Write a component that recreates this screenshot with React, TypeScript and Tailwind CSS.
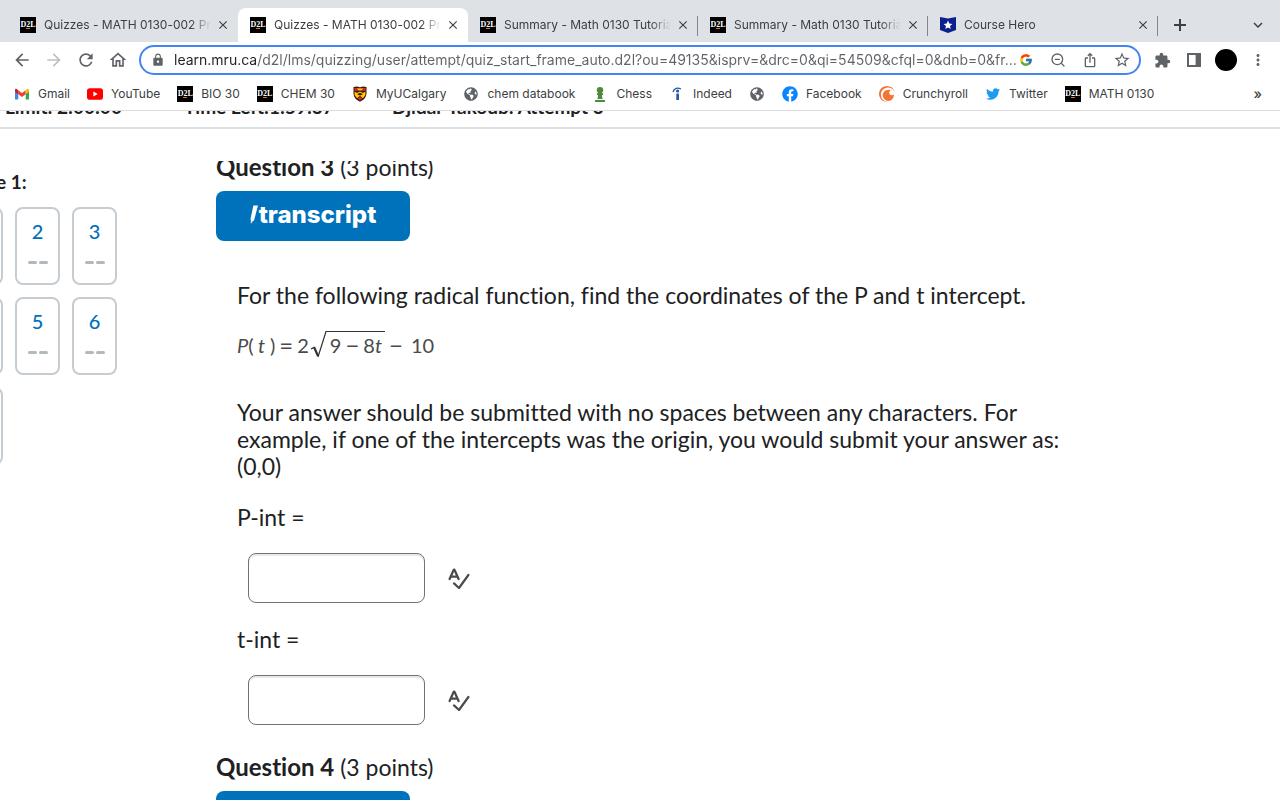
import type { ReactNode } from "react";
import { ZoomOut } from "lucide-react";
import { FcGoogle } from "react-icons/fc";
import { FaChessPawn, FaFacebook, FaGlobeAmericas, FaTwitter } from "react-icons/fa";
import {
  MdArrowBack,
  MdArrowForward,
  MdClose,
  MdExtension,
  MdKeyboardArrowDown,
  MdLock,
  MdMoreVert,
  MdOutlineHome,
  MdOutlineIosShare,
  MdRefresh,
  MdStarBorder,
} from "react-icons/md";
import { SiCrunchyroll } from "react-icons/si";

function D2LIcon() {
  return (
    <span className="relative flex h-4 w-4 shrink-0 items-center justify-center overflow-hidden bg-black font-['Liberation_Serif',serif] text-[8px] leading-none font-bold text-white">
      D2L
      <span className="absolute bottom-1 left-[6px] h-px w-1 bg-[#e87511]" />
    </span>
  );
}

function CourseHeroIcon() {
  return (
    <svg viewBox="0 0 16 16" className="h-4 w-4 shrink-0">
      <path d="M0 0 L8 1.5 L16 0 V13 L8 16 L0 13 Z" fill="#0c1f8f" />
      <path
        d="M8 3.6 L9.3 6.6 L12.4 6.9 L10 9 L10.7 12.1 L8 10.4 L5.3 12.1 L6 9 L3.6 6.9 L6.7 6.6 Z"
        fill="#fff"
      />
    </svg>
  );
}

function GmailIcon() {
  return (
    <svg viewBox="0 0 16 16" className="h-4 w-4 shrink-0">
      <path d="M1 4.5 V13.5 H4.3 V7 Z" fill="#4285f4" />
      <path d="M15 4.5 V13.5 H11.7 V7 Z" fill="#34a853" />
      <path d="M4.3 4.3 L8 7.1 L11.7 4.3 V8.2 L8 11 L4.3 8.2 Z" fill="#ea4335" />
      <path d="M1 4.2 C1 2.4 2.7 2.3 3.6 3.7 L4.3 4.3 V8.2 L1 5.8 Z" fill="#c5221f" />
      <path d="M15 4.2 C15 2.4 13.3 2.3 12.4 3.7 L11.7 4.3 V8.2 L15 5.8 Z" fill="#fbbc04" />
    </svg>
  );
}

function YouTubeIcon() {
  return (
    <svg viewBox="0 0 16 16" className="h-4 w-4 shrink-0">
      <rect y="2.3" width="16" height="11.4" rx="2.8" fill="#f00" />
      <path d="M6.4 5.6 L10.7 8 L6.4 10.4 Z" fill="#fff" />
    </svg>
  );
}

function CalgaryIcon() {
  return (
    <svg viewBox="0 0 16 16" className="h-4 w-4 shrink-0">
      <path d="M1.5 1 L5 0.6 L8 1.2 L11 0.6 L14.5 1 V7 C14.5 11.5 11.5 14 8 15.8 C4.5 14 1.5 11.5 1.5 7 Z" fill="#3a1a12" />
      <path d="M2.4 2 H13.6 V4.8 H2.4 Z" fill="#d9281c" />
      <path d="M5 2.6 H11 L9.6 4.2 H6.4 Z" fill="#ffcd00" />
      <path d="M2.6 5.4 L5 7 L8 5.6 L11 7 L13.4 5.4 V9 L11 12.2 L8 9.8 L5 12.2 L2.6 9 Z" fill="#ffcd00" />
      <path d="M5 8.2 L8 6.8 L11 8.2 L8 9.4 Z" fill="#3a1a12" />
      <path d="M8 10.6 L10.4 12.6 L8 14.6 L5.6 12.6 Z" fill="#d9281c" />
    </svg>
  );
}

function IndeedIcon() {
  return (
    <svg viewBox="0 0 16 16" className="h-4 w-4 shrink-0">
      <path d="M4 6 C5 2.2 8.6 1.2 12 3" fill="none" stroke="#2557a7" strokeWidth="1.3" />
      <circle cx="8.6" cy="5" r="1.6" fill="#2557a7" />
      <path d="M7.3 7.6 H10 V14 H7.3 Z" fill="#2557a7" />
    </svg>
  );
}

function SidePanelIcon() {
  return (
    <svg viewBox="0 0 14 14" className="h-[14px] w-[14px]">
      <path d="M0 0 H14 V14 H0 Z M2 2 V12 H8.6 V2 Z" fill="#5f6368" fillRule="evenodd" />
    </svg>
  );
}

function SpellCheckIcon() {
  return (
    <svg viewBox="0 0 22 22" className="h-[22px] w-[22px]" fill="none" stroke="#494c4e" strokeLinecap="round" strokeLinejoin="round">
      <path d="M1.6 12 L5.8 2.6 H6.4 L10.6 12 M3.4 9.6 H9" strokeWidth="2.3" />
      <path d="M6 16.4 L11 21 L20.4 8" strokeWidth="2.2" />
    </svg>
  );
}

function SlashIcon() {
  return (
    <svg viewBox="0 0 9 20" className="h-5 w-[9px]">
      <path d="M3.4 0.6 H8 L4 15.4 L1 17 L0.6 13.6 Z" fill="#fff" />
      <path d="M0.8 16.4 L2.8 16.6 L0.8 18.8 Z" fill="#fff" />
    </svg>
  );
}

interface TabInfo {
  title: string;
  icon: ReactNode;
  active?: boolean;
  divider?: boolean;
}

const tabs: TabInfo[] = [
  { title: "Quizzes - MATH 0130-002 Pre", icon: <D2LIcon /> },
  { title: "Quizzes - MATH 0130-002 Pre", icon: <D2LIcon />, active: true },
  { title: "Summary - Math 0130 Tutorial", icon: <D2LIcon />, divider: true },
  { title: "Summary - Math 0130 Tutorial", icon: <D2LIcon />, divider: true },
  { title: "Course Hero", icon: <CourseHeroIcon />, divider: true },
];

const bookmarks: { label: string; icon: ReactNode }[] = [
  { label: "Gmail", icon: <GmailIcon /> },
  { label: "YouTube", icon: <YouTubeIcon /> },
  { label: "BIO 30", icon: <D2LIcon /> },
  { label: "CHEM 30", icon: <D2LIcon /> },
  { label: "MyUCalgary", icon: <CalgaryIcon /> },
  { label: "chem databook", icon: <FaGlobeAmericas className="h-4 w-4 p-px text-[#5f6368]" /> },
  { label: "Chess", icon: <FaChessPawn className="h-4 w-4 text-[#4d8a3d]" /> },
  { label: "Indeed", icon: <IndeedIcon /> },
  { label: "", icon: <FaGlobeAmericas className="h-4 w-4 p-px text-[#5f6368]" /> },
  { label: "Facebook", icon: <FaFacebook className="h-4 w-4 text-[#0a84ff]" /> },
  { label: "Crunchyroll", icon: <SiCrunchyroll className="h-4 w-4 text-[#f47533]" /> },
  { label: "Twitter", icon: <FaTwitter className="h-4 w-4 p-px text-[#1d9bf0]" /> },
  { label: "MATH 0130", icon: <D2LIcon /> },
];

function Tab({ title, icon, active, divider }: TabInfo) {
  return (
    <div
      role="tab"
      aria-selected={!!active}
      className={`relative flex h-[34px] max-w-[230px] min-w-0 flex-1 items-center pr-[7px] pl-3 ${
        active ? "rounded-t-lg bg-white" : ""
      }`}
    >
      {icon}
      <span className="mr-1 ml-2 min-w-0 flex-1 overflow-hidden mask-r-from-88% mask-r-to-100% whitespace-nowrap">
        {title}
      </span>
      <button aria-label="Close tab" className="flex h-4 w-4 items-center justify-center">
        <MdClose className="h-[14px] w-[14px]" />
      </button>
      {divider && <span className="absolute top-2 right-0 h-5 w-px bg-[#80868b]" />}
    </div>
  );
}

function ToolButton({ label, children }: { label: string; children: ReactNode }) {
  return (
    <button aria-label={label} className="flex h-8 w-8 shrink-0 items-center justify-center text-[#5f6368]">
      {children}
    </button>
  );
}

function BrowserChrome() {
  return (
    <div className="shrink-0 border-b border-[#dadce0] bg-white font-[Inter,sans-serif] text-xs text-[#3c4043]">
      <div className="flex items-end bg-[#dee1e6] pt-2 pl-2">
        <div role="tablist" className="flex min-w-0 flex-1">
          {tabs.map((tab, i) => (
            <Tab key={i} {...tab} />
          ))}
          <button aria-label="New tab" className="flex h-[34px] w-11 items-center justify-center">
            <svg viewBox="0 0 12 12" className="h-3 w-3">
              <path d="M6 0 V12 M0 6 H12" stroke="#3c4043" strokeWidth="2" />
            </svg>
          </button>
        </div>
        <button aria-label="Search tabs" className="flex h-[34px] w-11 items-center justify-center">
          <MdKeyboardArrowDown className="h-[18px] w-[18px]" />
        </button>
      </div>

      <div className="flex h-9 items-center px-[6px]">
        <ToolButton label="Back">
          <MdArrowBack className="h-5 w-5" />
        </ToolButton>
        <ToolButton label="Forward">
          <MdArrowForward className="h-5 w-5 text-[#bdc1c6]" />
        </ToolButton>
        <ToolButton label="Reload">
          <MdRefresh className="h-5 w-5" />
        </ToolButton>
        <ToolButton label="Home">
          <MdOutlineHome className="h-5 w-5" />
        </ToolButton>
        <div className="mx-[5px] flex h-[30px] min-w-0 flex-1 items-center rounded-full border-2 border-[#4285f4] pr-px pl-[10px]">
          <MdLock className="h-[14px] w-[14px] shrink-0 text-[#5f6368]" />
          <input
            aria-label="Address"
            readOnly
            value="learn.mru.ca/d2l/lms/quizzing/user/attempt/quiz_start_frame_auto.d2l?ou=49135&isprv=&drc=0&qi=54509&cfql=0&dnb=0&fr..."
            className="-mr-2 ml-[9px] min-w-0 flex-1 bg-linear-to-r from-[#202124] from-[84px] to-[#5f6368] to-[84px] bg-clip-text text-sm text-transparent outline-none"
          />
          <ToolButton label="Search with Google">
            <FcGoogle className="h-[14px] w-[14px]" />
          </ToolButton>
          <ToolButton label="Zoom">
            <ZoomOut className="h-4 w-4" strokeWidth={2} />
          </ToolButton>
          <ToolButton label="Share">
            <MdOutlineIosShare className="h-4 w-4" />
          </ToolButton>
          <ToolButton label="Bookmark">
            <MdStarBorder className="h-[18px] w-[18px]" />
          </ToolButton>
        </div>
        <ToolButton label="Extensions">
          <MdExtension className="h-[17px] w-[17px]" />
        </ToolButton>
        <ToolButton label="Side panel">
          <SidePanelIcon />
        </ToolButton>
        <ToolButton label="Profile">
          <span className="h-[22px] w-[22px] rounded-full bg-black" />
        </ToolButton>
        <ToolButton label="Menu">
          <MdMoreVert className="h-[18px] w-[18px]" />
        </ToolButton>
      </div>

      <div className="flex h-8 items-center justify-between pr-[18px] pl-[14px]">
        <nav className="flex min-w-0 gap-[17px] overflow-hidden whitespace-nowrap">
          {bookmarks.map(({ label, icon }, i) => (
            <a key={i} href="#" aria-label={label || "Bookmark"} className="flex items-center gap-2">
              {icon}
              {label}
            </a>
          ))}
        </nav>
        <button aria-label="More bookmarks" className="text-sm leading-none font-medium">
          »
        </button>
      </div>
    </div>
  );
}

function PageNav() {
  return (
    <aside className="flex w-[117px] shrink-0 flex-col items-end overflow-hidden pt-[39px]">
      <div className="w-[159px]">
        <h2 className="pl-[7px] text-[19px] leading-7 font-bold">Page 1:</h2>
        <div className="mt-[11px] grid grid-cols-3 gap-3">
          {[1, 2, 3, 4, 5, 6, 7].map((n) => (
            <button
              key={n}
              className="flex h-[78px] flex-col items-center rounded-lg border-2 border-[#c6cdd2] pt-2 text-xl leading-7 font-medium text-[#006fbf]"
            >
              {n}
              <span className="mt-4 flex gap-[2px]">
                <span className="h-[3px] w-[9px] rounded-xs bg-[#b1b9be]" />
                <span className="h-[3px] w-[9px] rounded-xs bg-[#b1b9be]" />
              </span>
            </button>
          ))}
        </div>
      </div>
    </aside>
  );
}

function QuestionHeader({ number }: { number: number }) {
  return (
    <>
      <h2 className="leading-7">
        <b className="text-2xl leading-7">Question {number}</b> (3 points)
      </h2>
      <button className="mt-[10px] flex h-[50px] w-[194px] items-center justify-center rounded-lg bg-[#0072bc] pb-[2px] font-[Inter,sans-serif] text-2xl font-extrabold text-white">
        <SlashIcon />
        transcript
      </button>
    </>
  );
}

function Equation() {
  return (
    <p className="mt-[22px] flex h-7 items-center text-xl leading-7 text-[#4a4a4a]">
      <span>
        <i>P</i>(<i> t </i>)
      </span>
      <span className="mx-1 text-2xl leading-7">=</span>
      <span>2</span>
      <svg viewBox="0 0 18 28" className="h-7 w-[18px]" fill="none" stroke="#333">
        <path d="M2 18 L5 16.4" strokeWidth="1.2" />
        <path d="M5 16 L9 25" strokeWidth="2.2" />
        <path d="M9 26 L17 0.5 H18" strokeWidth="1.2" />
      </svg>
      <span className="flex h-7 gap-1 border-t border-[#333] px-[3px] leading-[26px]">
        <span>9</span>
        <span className="text-2xl leading-[26px]">−</span>
        <span>
          8<i>t</i>
        </span>
      </span>
      <span className="mx-1 text-2xl leading-7">−</span>
      <span className="ml-1">10</span>
    </p>
  );
}

function AnswerField({ id, label }: { id: string; label: string }) {
  return (
    <div>
      <label htmlFor={id} className="block">
        {label}
      </label>
      <div className="mt-[22px] ml-[11px] flex items-center gap-[23px]">
        <input
          id={id}
          type="text"
          className="h-[50px] w-[177px] rounded-lg border border-[#6e7376] px-3 shadow-[inset_0_2px_0_#e8eaec] outline-none"
        />
        <button aria-label="Check spelling">
          <SpellCheckIcon />
        </button>
      </div>
    </div>
  );
}

export default function App() {
  return (
    <div className="flex h-screen flex-col overflow-hidden bg-white font-[Lato,sans-serif] text-[23px] text-[#202122] [font-variant-ligatures:none]">
      <BrowserChrome />
      <main className="flex min-h-0 flex-1 flex-col overflow-hidden">
        <header className="flex h-[18px] shrink-0 items-end overflow-hidden border-b-2 border-[#dbe0e4] pb-2 pl-[5px] text-[19px] leading-6 font-bold whitespace-nowrap">
          <span className="w-[179px]">Limit: 2:00:00</span>
          <span className="w-[208px]">Time Left:1:59:37</span>
          <span>Djidar Yakoub: Attempt 3</span>
        </header>
        <div className="flex min-h-0 flex-1">
          <PageNav />
          <section className="mt-8 ml-[99px] min-w-0 flex-1 overflow-hidden">
            <div className="-mt-2">
              <QuestionHeader number={3} />
              <div className="mt-[41px] mb-[28px] ml-[21px] max-w-[840px] leading-[27px]">
                <p>For the following radical function, find the coordinates of the P and t intercept.</p>
                <Equation />
                <p className="mt-10">
                  Your answer should be submitted with no spaces between any characters. For example, if one of the
                  intercepts was the origin, you would submit your answer as: (0,0)
                </p>
                <div className="mt-6 flex flex-col gap-[23px]">
                  <AnswerField id="p-int" label="P-int =" />
                  <AnswerField id="t-int" label="t-int =" />
                </div>
              </div>
              <QuestionHeader number={4} />
            </div>
          </section>
        </div>
      </main>
    </div>
  );
}
